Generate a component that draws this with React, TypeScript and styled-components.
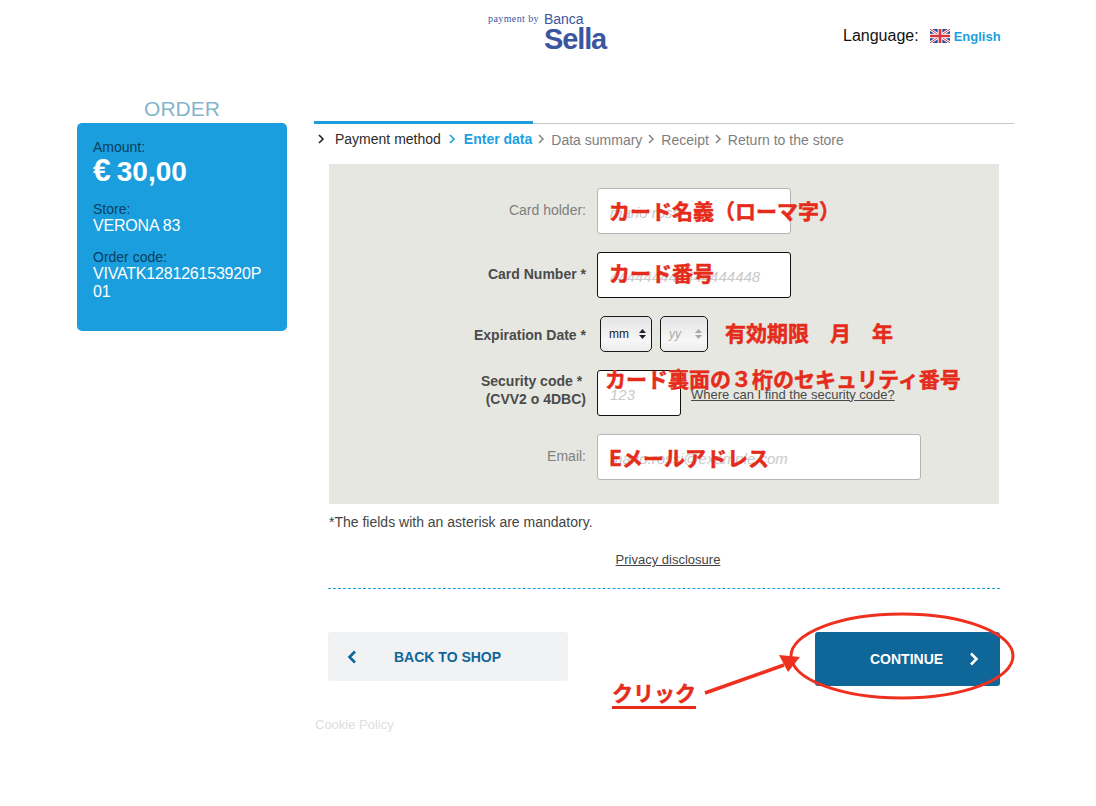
import React from 'react'
import styled, { createGlobalStyle } from 'styled-components'

const GlobalStyle = createGlobalStyle`
  html, body {
    margin: 0;
    padding: 0;
    background: #fff;
    font-family: "Liberation Sans", Arial, sans-serif;
  }
`

const Page = styled.div`
  position: relative;
  width: 1096px;
  height: 806px;
  overflow: hidden;
`

const TopBar = styled.header`
  display: flex;
  height: 98px;
  padding-left: 488px;
  box-sizing: border-box;
`

const Logo = styled.div`
  display: flex;
  width: 118px;
  height: 52px;
  padding-top: 12px;
  color: #3b55a0;
  gap: 5px;
`

const PaymentBy = styled.span`
  font-family: "Liberation Serif", serif;
  font-size: 10px;
  letter-spacing: 0.4px;
  line-height: 13px;
  white-space: nowrap;
`

const LogoWords = styled.div`
  display: flex;
  flex-direction: column;
`

const Banca = styled.span`
  font-size: 14px;
  line-height: 14px;
`

const Sella = styled.span`
  font-size: 29px;
  font-weight: 700;
  line-height: 26px;
  letter-spacing: -1.1px;
`

const Language = styled.div`
  display: flex;
  align-items: center;
  height: 20px;
  margin: 26px 0 0 237px;
  font-size: 16px;
  color: #111;
`

const Flag = styled.svg`
  width: 20px;
  height: 14px;
  margin: 0 4px 0 11px;
`

const LanguageLink = styled.span`
  font-size: 13px;
  font-weight: 700;
  color: #1ba0e2;
`

const Columns = styled.main`
  display: flex;
  padding-left: 77px;
  gap: 27px;
`

const Sidebar = styled.aside`
  width: 210px;
`

const OrderTitle = styled.h2`
  margin: 0;
  height: 25px;
  font-size: 21px;
  line-height: 22px;
  font-weight: 400;
  text-align: center;
  color: #86b5cb;
`

const OrderCard = styled.div`
  height: 208px;
  padding: 16px 20px 16px 16px;
  box-sizing: border-box;
  border-radius: 5px;
  background: #1b9edd;
  color: #fff;
`

const CardLabel = styled.div`
  font-size: 14px;
  line-height: 16px;
  color: #0b3f60;
`

const AmountValue = styled.div`
  display: flex;
  align-items: baseline;
  gap: 6px;
  height: 32px;
  font-size: 28px;
  font-weight: 700;
  line-height: 30px;
  margin-bottom: 14px;
`

const EuroSign = styled.span`
  font-size: 32px;
  line-height: 30px;
`

const CardValue = styled.div`
  font-size: 16px;
  line-height: 18px;
  margin-bottom: 14px;
  letter-spacing: -0.2px;
  word-break: break-all;
`

const Content = styled.section`
  width: 700px;
  padding-top: 24px;
`

const Progress = styled.div`
  height: 1px;
  margin-top: 1px;
  background: #c8c8c8;
`

const ProgressFill = styled.div`
  height: 3px;
  width: 219px;
  position: relative;
  top: -2px;
  background: #1b9edd;
`

const Steps = styled.nav`
  display: flex;
  align-items: center;
  height: 30px;
  padding: 0 0 0 3px;
`

const Step = styled.span<{ $state: 'done' | 'active' | 'todo' }>`
  font-size: 14px;
  white-space: nowrap;
  font-weight: ${p => (p.$state === 'active' ? 700 : 400)};
  color: ${p => (p.$state === 'done' ? '#2b2b2b' : p.$state === 'active' ? '#1ba0e2' : '#7e7e7e')};
  margin-top: ${p => (p.$state === 'todo' ? '2px' : '0')};
`

const stepMargins = { done: '0 10px 0 0', active: '0 8px 0 7px', todo: '0 6px 0 5px' }

const StepArrow = styled.svg<{ $state: 'done' | 'active' | 'todo' }>`
  width: 8px;
  height: 10px;
  margin: ${p => stepMargins[p.$state]};
  fill: none;
  stroke-width: 1.6;
  stroke: ${p => (p.$state === 'done' ? '#222' : p.$state === 'active' ? '#1ba0e2' : '#888')};
`

const FormArea = styled.div`
  width: 671px;
  margin-left: 15px;
`

const FormPanel = styled.form`
  display: flex;
  flex-direction: column;
  gap: 18px;
  width: 670px;
  height: 340px;
  padding: 24px 0;
  margin-top: 10px;
  box-sizing: border-box;
  background: #e6e7e1;
`

const Row = styled.div<{ $height: number }>`
  display: flex;
  align-items: center;
  gap: 11px;
  height: ${p => p.$height}px;
`

const Label = styled.label<{ $required?: boolean; $shift: number }>`
  width: 257px;
  font-size: 14px;
  line-height: 18px;
  text-align: right;
  margin-top: ${p => p.$shift}px;
  font-weight: ${p => (p.$required ? 700 : 400)};
  color: ${p => (p.$required ? '#4b4b4b' : '#7f7f7f')};
`

const Input = styled.input<{ $width: number; $focused?: boolean }>`
  width: ${p => p.$width}px;
  height: 46px;
  padding: 2px 12px 0;
  box-sizing: border-box;
  background: #fff;
  border-radius: 3px;
  outline: none;
  font-family: inherit;
  font-size: 15px;
  font-style: italic;
  border: 1px solid ${p => (p.$focused ? '#111' : '#b5b5b5')};

  &::placeholder {
    color: #c9c9c9;
    opacity: 1;
  }
`

const DateGroup = styled.div`
  display: flex;
  gap: 8px;
  margin-left: 3px;
`

const DateSelect = styled.div<{ $width: number; $muted?: boolean }>`
  display: flex;
  align-items: center;
  justify-content: space-between;
  width: ${p => p.$width}px;
  height: 36px;
  padding: 0 5px 0 8px;
  box-sizing: border-box;
  border: 1px solid #1a1a1a;
  border-radius: 5px;
  background: linear-gradient(#e4e4e4, #f7f7f7 70%, #ececec);
  font-size: 12px;
  font-style: ${p => (p.$muted ? 'italic' : 'normal')};
  color: ${p => (p.$muted ? '#a9a9a9' : '#222')};
`

const SelectArrows = styled.svg<{ $muted?: boolean }>`
  width: 7px;
  height: 12px;
  fill: ${p => (p.$muted ? '#a9a9a9' : '#222')};
`

const HelpLink = styled.a`
  font-size: 13px;
  color: #4a4a4a;
  text-decoration: underline;
  margin: 2px 0 0 -1px;
`

const Mandatory = styled.p`
  margin: 10px 0 0;
  font-size: 14px;
  line-height: 16px;
  color: #444;
`

const Privacy = styled.a`
  display: block;
  margin-top: 22px;
  padding-left: 7px;
  font-size: 13px;
  line-height: 15px;
  text-align: center;
  color: #444;
  text-decoration: underline;
`

const Divider = styled.hr`
  margin: 21px 0 0 -1px;
  border: 0;
  border-top: 1px dashed #1ba0e2;
`

const Actions = styled.div`
  display: flex;
  justify-content: space-between;
  align-items: flex-start;
  margin: 43px 0 0 -1px;
`

const BackButton = styled.button`
  display: flex;
  align-items: center;
  width: 240px;
  height: 49px;
  padding: 0 0 0 19px;
  gap: 37px;
  border: 0;
  border-radius: 3px;
  background: #f1f2f4;
  color: #0f6698;
  font-family: inherit;
  font-size: 14px;
  font-weight: 700;
`

const ContinueButton = styled.button`
  display: flex;
  align-items: center;
  width: 185px;
  height: 54px;
  padding: 0 0 0 55px;
  gap: 26px;
  border: 0;
  border-radius: 3px;
  background: #0f6698;
  color: #fff;
  font-family: inherit;
  font-size: 14px;
  font-weight: 700;
`

const ButtonArrow = styled.svg`
  width: 10px;
  height: 14px;
  fill: none;
  stroke: currentColor;
  stroke-width: 2.6;
`

const CookieLink = styled.a`
  display: block;
  margin: 31px 0 0 1px;
  font-size: 13px;
  line-height: 15px;
  color: #dedede;
`

// the red notes were drawn on top of the screenshot, so they sit over the form
const Note = styled.span<{ $x: number; $y: number; $underline?: boolean }>`
  position: absolute;
  left: ${p => p.$x}px;
  top: ${p => p.$y}px;
  font-family: "Noto Sans CJK JP", "Liberation Sans", sans-serif;
  font-size: 21px;
  font-weight: 700;
  line-height: 28px;
  white-space: nowrap;
  color: #e52b1a;
  -webkit-text-stroke: 0.5px #e52b1a;
  border-bottom: ${p => (p.$underline ? '3px solid #e52b1a' : '0')};
`

const Markup = styled.svg`
  position: absolute;
  left: 700px;
  top: 605px;
  width: 330px;
  height: 105px;
`

function Chevron({ state }: { state: 'done' | 'active' | 'todo' }) {
  return (
    <StepArrow $state={state} viewBox="0 0 8 10">
      <path d="M2 1l4 4-4 4" />
    </StepArrow>
  )
}

export default function App() {
  return (
    <Page>
      <GlobalStyle />
      <TopBar>
        <Logo>
          <PaymentBy>payment by</PaymentBy>
          <LogoWords>
            <Banca>Banca</Banca>
            <Sella>Sella</Sella>
          </LogoWords>
        </Logo>
        <Language>
          Language:
          <Flag viewBox="0 0 60 42">
            <rect width="60" height="42" fill="#2b4a94" />
            <path d="M0 0l60 42M60 0L0 42" stroke="#fff" strokeWidth="8" />
            <path d="M0 0l60 42M60 0L0 42" stroke="#d8343c" strokeWidth="3" />
            <path d="M30 0v42M0 21h60" stroke="#fff" strokeWidth="14" />
            <path d="M30 0v42M0 21h60" stroke="#d8343c" strokeWidth="8" />
          </Flag>
          <LanguageLink>English</LanguageLink>
        </Language>
      </TopBar>

      <Columns>
        <Sidebar>
          <OrderTitle>ORDER</OrderTitle>
          <OrderCard>
            <CardLabel>Amount:</CardLabel>
            <AmountValue>
              <EuroSign>€</EuroSign>
              <span>30,00</span>
            </AmountValue>
            <CardLabel>Store:</CardLabel>
            <CardValue>VERONA 83</CardValue>
            <CardLabel>Order code:</CardLabel>
            <CardValue>VIVATK128126153920P01</CardValue>
          </OrderCard>
        </Sidebar>

        <Content>
          <Progress>
            <ProgressFill />
          </Progress>
          <Steps>
            <Chevron state="done" />
            <Step $state="done">Payment method</Step>
            <Chevron state="active" />
            <Step $state="active">Enter data</Step>
            <Chevron state="todo" />
            <Step $state="todo">Data summary</Step>
            <Chevron state="todo" />
            <Step $state="todo">Receipt</Step>
            <Chevron state="todo" />
            <Step $state="todo">Return to the store</Step>
          </Steps>

          <FormArea>
            <FormPanel>
              <Row $height={46}>
                <Label $shift={-3}>Card holder:</Label>
                <Input $width={194} placeholder="mario rossi" />
              </Row>
              <Row $height={46}>
                <Label $required $shift={-3}>Card Number *</Label>
                <Input $width={194} $focused placeholder="444444444444444448" />
              </Row>
              <Row $height={36}>
                <Label $required $shift={1}>Expiration Date *</Label>
                <DateGroup>
                  <DateSelect $width={52}>
                    mm
                    <SelectArrows viewBox="0 0 7 12">
                      <path d="M3.5 1L7 5H0zM3.5 11L0 7h7z" />
                    </SelectArrows>
                  </DateSelect>
                  <DateSelect $width={48} $muted>
                    yy
                    <SelectArrows $muted viewBox="0 0 7 12">
                      <path d="M3.5 1L7 5H0zM3.5 11L0 7h7z" />
                    </SelectArrows>
                  </DateSelect>
                </DateGroup>
              </Row>
              <Row $height={46}>
                <Label $required $shift={-6}>
                  Security code *&nbsp;
                  <br />
                  (CVV2 o 4DBC)
                </Label>
                <Input $width={84} $focused placeholder="123" />
                <HelpLink>Where can I find the security code?</HelpLink>
              </Row>
              <Row $height={46}>
                <Label $shift={-3}>Email:</Label>
                <Input $width={324} placeholder="mario.rossi@example.com" />
              </Row>
            </FormPanel>

            <Mandatory>*The fields with an asterisk are mandatory.</Mandatory>
            <Privacy>Privacy disclosure</Privacy>
            <Divider />

            <Actions>
              <BackButton type="button">
                <ButtonArrow viewBox="0 0 10 14">
                  <path d="M8 1.500L2.500 7 8 12.500" />
                </ButtonArrow>
                BACK TO SHOP
              </BackButton>
              <ContinueButton type="button">
                CONTINUE
                <ButtonArrow viewBox="0 0 10 14">
                  <path d="M2 1.500L7.500 7 2 12.500" />
                </ButtonArrow>
              </ContinueButton>
            </Actions>
          </FormArea>

          <CookieLink>Cookie Policy</CookieLink>
        </Content>
      </Columns>

      <Note $x={609} $y={196}>カード名義（ローマ字）</Note>
      <Note $x={609} $y={258}>カード番号</Note>
      <Note $x={725} $y={318}>有効期限　月　年</Note>
      <Note $x={605} $y={364}>カード裏面の３桁のセキュリティ番号</Note>
      <Note $x={609} $y={443}>Eメールアドレス</Note>
      <Note $x={612} $y={678} $underline>クリック</Note>

      <Markup viewBox="0 0 330 105">
        <ellipse cx="202" cy="51" rx="111" ry="42" fill="none" stroke="#f0301f" strokeWidth="3" />
        <path d="M5 88L84 60" stroke="#f0301f" strokeWidth="3.500" fill="none" />
        <path d="M100 52L79 50L88 67z" fill="#f0301f" />
      </Markup>
    </Page>
  )
}
